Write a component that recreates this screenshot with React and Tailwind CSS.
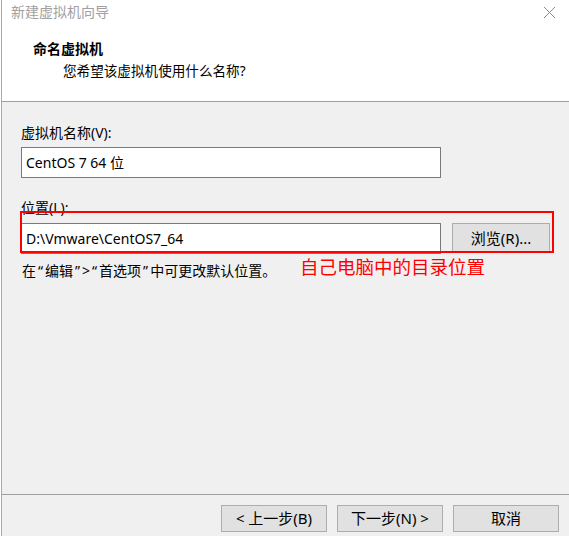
import React from 'react';

const font = { fontFamily: '"Noto Sans", "Noto Sans CJK SC", sans-serif' };

function WinButton({ children, size = 'h-[27px] w-[106px]', className = '' }) {
  return (
    <button
      className={`${size} bg-[#e1e1e1] border border-[#adadad] text-[15px] leading-none text-black flex items-center justify-center shrink-0 ${className}`}
    >
      {children}
    </button>
  );
}

const Q = ({ children }) => <span className="mx-[2px]">{children}</span>;

export default function App() {
  return (
    <div className="w-[569px] h-[536px] bg-white pl-px overflow-hidden" style={font}>
      <div className="h-full flex flex-col border-l border-[#a9a9a9]">
        {/* title bar */}
        <div className="h-[24px] bg-white flex items-center justify-between pl-[9px] pr-[13px]">
          <span className="text-[14px] text-[#a0a0a0] leading-none">新建虚拟机向导</span>
          <svg width="13" height="13" viewBox="0 0 13 13" className="text-[#8a8a8a]">
            <path d="M1 1 L12 12 M12 1 L1 12" stroke="currentColor" strokeWidth="1" fill="none" />
          </svg>
        </div>

        {/* header */}
        <div className="h-[78px] bg-white border-b border-[#a0a0a0] pl-[31px] pt-[15px]">
          <p className="text-[14px] font-bold leading-[20px] text-black">命名虚拟机</p>
          <p className="text-[13.6px] leading-[20px] text-black mt-[2px] pl-[30px]">您希望该虚拟机使用什么名称?</p>
        </div>

        {/* body */}
        <div className="flex-1 bg-[#f0f0f0] pl-[19px] pt-[21px]">
          <p className="text-[14px] leading-[20px] text-black">虚拟机名称(V):</p>
          <div className="mt-[4px] w-[420px] h-[31px] bg-white border border-[#7a7a7a] flex items-center pl-[4px] text-[14px] text-black">
            CentOS 7 64 位
          </div>

          <p className="mt-[20px] text-[14px] leading-[20px] text-black">位置(L):</p>
          <div className="relative">
            <div className="mt-[5px] flex items-start">
              <div className="w-[420px] h-[31px] bg-white border border-[#7a7a7a] flex items-center pl-[4px] text-[14px] text-black">
                D:\Vmware\CentOS7_64
              </div>
              <WinButton size="h-[30px] w-[98px]" className="ml-[11px]">浏览(R)...</WinButton>
            </div>
            <div className="absolute left-[-1px] top-[-12px] w-[534px] h-[42px] border-2 border-[#ff0000] pointer-events-none" />
            <span className="absolute left-[279px] top-[35px] text-[18.5px] leading-none text-[#ff0000]">自己电脑中的目录位置</span>
          </div>
          <p className="mt-[7px] text-[14px] leading-[20px] text-black pl-[1px]">
            在<Q>“</Q>编辑<Q>”</Q>&gt;<Q>“</Q>首选项<Q>”</Q>中可更改默认位置。
          </p>
        </div>

        {/* footer */}
        <div className="h-[42px] bg-[#f0f0f0] border-t border-[#a0a0a0] flex justify-end items-start pt-[10px] pr-[10px] gap-[10px]">
          <WinButton>&lt;&nbsp;上一步(B)</WinButton>
          <WinButton>下一步(N)&nbsp;&gt;</WinButton>
          <WinButton>取消</WinButton>
        </div>
      </div>
    </div>
  );
}
